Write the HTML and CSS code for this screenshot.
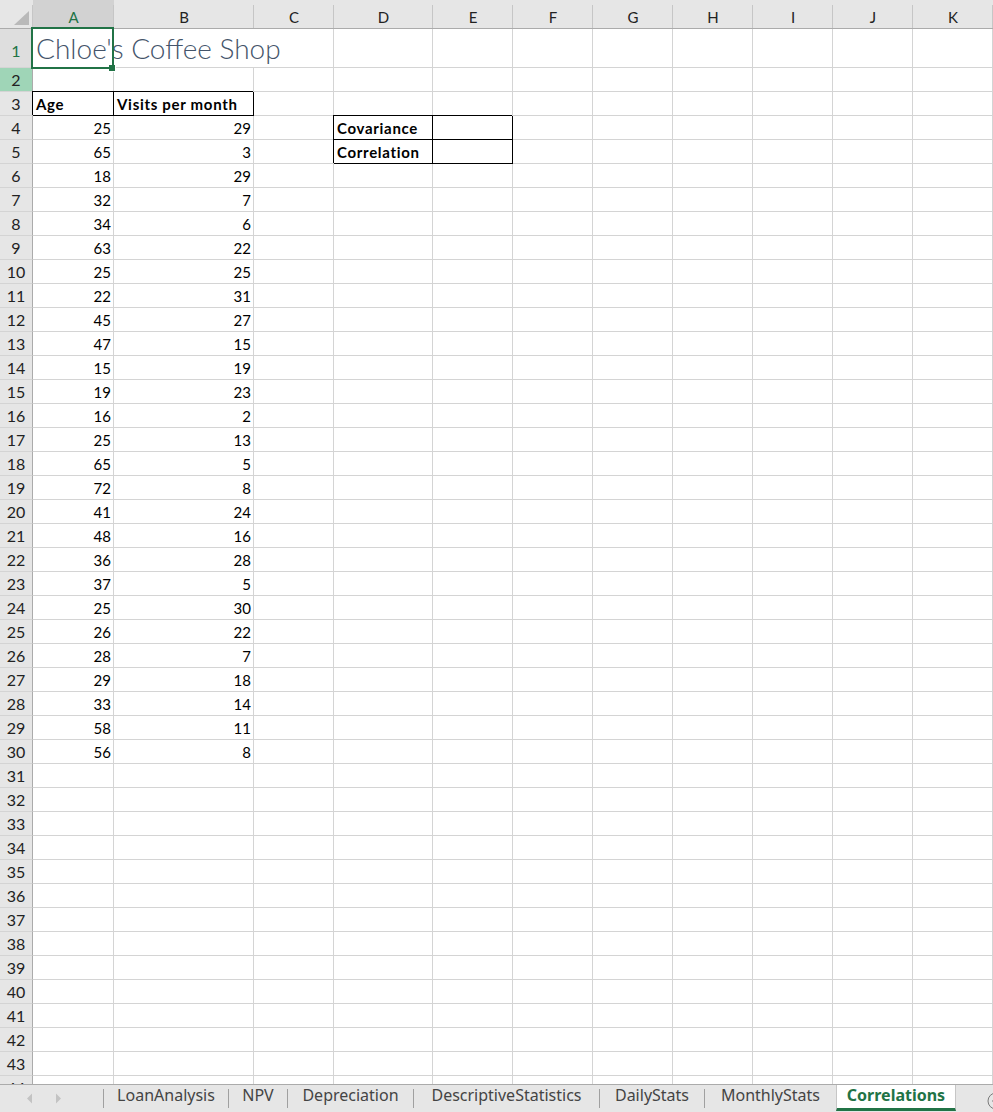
FILE: index.html
```html
<!DOCTYPE html>
<html lang="en">
<head>
<meta charset="utf-8">
<title>Chloe's Coffee Shop</title>
<link rel="stylesheet" href="styles.css">
</head>
<body>
<div class="sheet">
  <div class="row colhead">
    <div class="ch corner"><svg width="33" height="28" viewBox="0 0 33 28"><polygon points="29,11 29,25 14,25" fill="#b9b9b9"/></svg></div>
    <div class="ch on">A</div><div class="ch">B</div><div class="ch">C</div><div class="ch">D</div><div class="ch">E</div><div class="ch">F</div><div class="ch">G</div><div class="ch">H</div><div class="ch">I</div><div class="ch">J</div><div class="ch">K</div>
  </div>
  <div class="row r1"><div class="rh rh1 on">1</div><div class="title">Chloe's Coffee Shop</div></div>
  <div class="row"><div class="rh hl">2</div></div>
  <div class="row"><div class="rh">3</div><div class="c b bx">Age</div><div class="c b bx">Visits per month</div></div>
  <div class="row"><div class="rh">4</div><div class="c n">25</div><div class="c n">29</div><div class="c b bx colD">Covariance</div><div class="c bx"></div></div>
  <div class="row"><div class="rh">5</div><div class="c n">65</div><div class="c n">3</div><div class="c b bx colD">Correlation</div><div class="c bx"></div></div>
  <div class="row"><div class="rh">6</div><div class="c n">18</div><div class="c n">29</div></div>
  <div class="row"><div class="rh">7</div><div class="c n">32</div><div class="c n">7</div></div>
  <div class="row"><div class="rh">8</div><div class="c n">34</div><div class="c n">6</div></div>
  <div class="row"><div class="rh">9</div><div class="c n">63</div><div class="c n">22</div></div>
  <div class="row"><div class="rh">10</div><div class="c n">25</div><div class="c n">25</div></div>
  <div class="row"><div class="rh">11</div><div class="c n">22</div><div class="c n">31</div></div>
  <div class="row"><div class="rh">12</div><div class="c n">45</div><div class="c n">27</div></div>
  <div class="row"><div class="rh">13</div><div class="c n">47</div><div class="c n">15</div></div>
  <div class="row"><div class="rh">14</div><div class="c n">15</div><div class="c n">19</div></div>
  <div class="row"><div class="rh">15</div><div class="c n">19</div><div class="c n">23</div></div>
  <div class="row"><div class="rh">16</div><div class="c n">16</div><div class="c n">2</div></div>
  <div class="row"><div class="rh">17</div><div class="c n">25</div><div class="c n">13</div></div>
  <div class="row"><div class="rh">18</div><div class="c n">65</div><div class="c n">5</div></div>
  <div class="row"><div class="rh">19</div><div class="c n">72</div><div class="c n">8</div></div>
  <div class="row"><div class="rh">20</div><div class="c n">41</div><div class="c n">24</div></div>
  <div class="row"><div class="rh">21</div><div class="c n">48</div><div class="c n">16</div></div>
  <div class="row"><div class="rh">22</div><div class="c n">36</div><div class="c n">28</div></div>
  <div class="row"><div class="rh">23</div><div class="c n">37</div><div class="c n">5</div></div>
  <div class="row"><div class="rh">24</div><div class="c n">25</div><div class="c n">30</div></div>
  <div class="row"><div class="rh">25</div><div class="c n">26</div><div class="c n">22</div></div>
  <div class="row"><div class="rh">26</div><div class="c n">28</div><div class="c n">7</div></div>
  <div class="row"><div class="rh">27</div><div class="c n">29</div><div class="c n">18</div></div>
  <div class="row"><div class="rh">28</div><div class="c n">33</div><div class="c n">14</div></div>
  <div class="row"><div class="rh">29</div><div class="c n">58</div><div class="c n">11</div></div>
  <div class="row"><div class="rh">30</div><div class="c n">56</div><div class="c n">8</div></div>
  <div class="row"><div class="rh">31</div></div>
  <div class="row"><div class="rh">32</div></div>
  <div class="row"><div class="rh">33</div></div>
  <div class="row"><div class="rh">34</div></div>
  <div class="row"><div class="rh">35</div></div>
  <div class="row"><div class="rh">36</div></div>
  <div class="row"><div class="rh">37</div></div>
  <div class="row"><div class="rh">38</div></div>
  <div class="row"><div class="rh">39</div></div>
  <div class="row"><div class="rh">40</div></div>
  <div class="row"><div class="rh">41</div></div>
  <div class="row"><div class="rh">42</div></div>
  <div class="row"><div class="rh">43</div></div>
  <div class="row"><div class="rh">44</div></div>
  <div class="selbox"></div>
  <div class="handle"></div>
</div>
<div class="tabs">
  <div class="nav"><svg width="103" height="27" viewBox="0 0 103 27"><polygon points="27,13.5 32,8.5 32,18.5" fill="#c3c3c3"/><polygon points="61,13.5 56,8.5 56,18.5" fill="#c3c3c3"/></svg></div>
  <div class="tab w-loan">LoanAnalysis</div>
  <div class="tab w-npv">NPV</div>
  <div class="tab w-dep">Depreciation</div>
  <div class="tab w-desc">DescriptiveStatistics</div>
  <div class="tab w-daily">DailyStats</div>
  <div class="tab w-month">MonthlyStats</div>
  <div class="tab active">Correlations</div>
  <svg class="add" width="18" height="18" viewBox="0 0 18 18"><circle cx="9" cy="9" r="8" fill="none" stroke="#7a7a7a" stroke-width="1"/><path d="M9 5v8M5 9h8" stroke="#7a7a7a" stroke-width="1"/></svg>
</div>
</body>
</html>
```

FILE: styles.css
```css
* { box-sizing: border-box; }

body {
  margin: 0;
  width: 993px;
  height: 1112px;
  overflow: hidden;
  background: #fff;
  font-family: Lato, "Liberation Sans", sans-serif;
  color: #000;
}

.sheet {
  position: relative;
  height: 1084px;
  overflow: hidden;
  background-image:
    linear-gradient(#d4d4d4, #d4d4d4), linear-gradient(#d4d4d4, #d4d4d4),
    linear-gradient(#d4d4d4, #d4d4d4), linear-gradient(#d4d4d4, #d4d4d4),
    linear-gradient(#d4d4d4, #d4d4d4), linear-gradient(#d4d4d4, #d4d4d4),
    linear-gradient(#d4d4d4, #d4d4d4), linear-gradient(#d4d4d4, #d4d4d4),
    linear-gradient(#d4d4d4, #d4d4d4), linear-gradient(#d4d4d4, #d4d4d4),
    linear-gradient(#d4d4d4, #d4d4d4);
  background-repeat: no-repeat;
  background-size: 1px 100%;
  background-position: 113px 0, 253px 0, 333px 0, 432px 0, 512px 0, 592px 0,
    672px 0, 752px 0, 832px 0, 912px 0, 992px 0;
}

.row {
  display: grid;
  grid-template-columns: 33px 81px 140px 80px 99px 80px 80px 80px 80px 80px 80px 80px;
  height: 24px;
  border-bottom: 1px solid #d4d4d4;
}

.r1 { height: 39px; }

.colhead {
  height: 29px;
  border-bottom: 1px solid #ababab;
}

.ch {
  background: linear-gradient(#c6c6c6, #c6c6c6) right 5px / 1px 23px no-repeat, #e6e6e6;
  text-align: center;
  font-size: 15px;
  line-height: 18px;
  padding-top: 8px;
  color: #222;
}

.ch.on {
  background-color: #d2d2d2;
  color: #217346;
}

.corner { padding-top: 0; }
.corner svg { display: block; }

.rh {
  background: #e6e6e6;
  border-right: 1px solid #ababab;
  border-bottom: 1px solid #d4d4d4;
  margin-bottom: -1px;
  text-align: center;
  font-size: 16px;
  line-height: 18px;
  padding-top: 3px;
  color: #222;
}

.rh1 { padding-top: 13px; }
.rh.on { background: #dedede; color: #217346; }
.rh.hl { background: #9fd5b7; }

.title {
  grid-column: 2 / span 3;
  background: #fff;
  border-right: 1px solid #d4d4d4;
  font-size: 28px;
  font-weight: 300;
  line-height: 34px;
  padding: 2px 3px 0;
  color: #44546a;
  white-space: nowrap;
}

.c {
  font-size: 15px;
  line-height: 18px;
  padding: 3px 3px 0;
  white-space: nowrap;
}

.n { text-align: right; }
.b { font-weight: 700; letter-spacing: 0.7px; }
.colD { grid-column: 5; }

.bx {
  border-right: 1px solid #000;
  border-bottom: 1px solid #000;
  margin-bottom: -1px;
  box-shadow: -1px -1px 0 #000;
}

.selbox {
  position: absolute;
  left: 31px;
  top: 27px;
  width: 83px;
  height: 42px;
  border: 2px solid #217346;
}

.handle {
  position: absolute;
  left: 109px;
  top: 65px;
  width: 6px;
  height: 6px;
  background: #217346;
  box-shadow: 1px 1px 0 #fff;
}

.tabs {
  display: flex;
  align-items: flex-start;
  height: 28px;
  border-top: 1px solid #ababab;
  background: #e6e6e6;
  font-family: "Noto Sans", "Open Sans", sans-serif;
  font-size: 16px;
  color: #444;
  overflow: hidden;
}

.nav { flex: none; width: 103px; height: 27px; }
.nav svg { display: block; }

.tab {
  flex: none;
  margin-top: 4px;
  height: 19px;
  border-left: 1px solid #a0a0a0;
  text-align: center;
  line-height: 12px;
  white-space: nowrap;
}

.w-loan { width: 125px; }
.w-npv { width: 59px; }
.w-dep { width: 126px; }
.w-desc { width: 186px; }
.w-daily { width: 105px; }
.w-month { width: 132px; }

.tab.active {
  width: 120px;
  height: 26px;
  margin-top: 0;
  background: #fff;
  border-left: 1px solid #c6c6c6;
  border-right: 1px solid #c6c6c6;
  border-bottom: 3px solid #217346;
  color: #217346;
  font-weight: 700;
  line-height: 20px;
}

.add { flex: none; margin-left: 31px; margin-top: 7px; }
```
